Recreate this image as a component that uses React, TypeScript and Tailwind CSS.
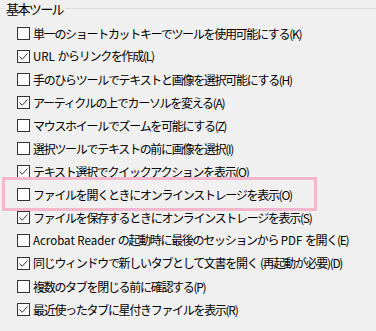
const items: { label: string; checked: boolean }[] = [
  { label: "単一のショートカットキーでツールを使用可能にする(K)", checked: false },
  { label: "URL からリンクを作成(L)", checked: true },
  { label: "手のひらツールでテキストと画像を選択可能にする(H)", checked: false },
  { label: "アーティクルの上でカーソルを変える(A)", checked: true },
  { label: "マウスホイールでズームを可能にする(Z)", checked: false },
  { label: "選択ツールでテキストの前に画像を選択(I)", checked: false },
  { label: "テキスト選択でクイックアクションを表示(Q)", checked: true },
  { label: "ファイルを開くときにオンラインストレージを表示(O)", checked: false },
  { label: "ファイルを保存するときにオンラインストレージを表示(S)", checked: true },
  { label: "Acrobat Reader の起動時に最後のセッションから PDF を開く(E)", checked: false },
  { label: "同じウィンドウで新しいタブとして文書を開く (再起動が必要)(D)", checked: true },
  { label: "複数のタブを閉じる前に確認する(P)", checked: false },
  { label: "最近使ったタブに星付きファイルを表示(R)", checked: true },
];

// latin words keep normal spacing, the japanese runs are tightened
const Label = ({ text }: { text: string }) => {
  const parts = text.split(/([A-Za-z]{2,}(?: [A-Za-z]{2,})*| )/).filter(Boolean);
  return (
    <span className="text-[12px] leading-none whitespace-nowrap">
      {parts.map((p, i) =>
        /^[A-Za-z ]+$/.test(p) ? (
          <span key={i} className="text-[11.5px] tracking-normal">{p}</span>
        ) : (
          <span key={i} className="tracking-[-1.3px]">{p}</span>
        )
      )}
    </span>
  );
};

const Box = ({ checked }: { checked: boolean }) => (
  <span className="w-[13px] h-[13px] shrink-0 border border-[#333333] bg-white flex items-center justify-center">
    {checked && (
      <svg width="11" height="11" viewBox="0 0 11 11">
        <path d="M1.5 5.5 L4.2 8.3 L9.5 2.5" fill="none" stroke="#333333" strokeWidth="1" />
      </svg>
    )}
  </span>
);

export default function App() {
  return (
    <div
      className="relative w-[376px] h-[331px] bg-[#f0f0f0] overflow-hidden text-black"
      style={{ fontFamily: '"Noto Sans CJK JP", "Noto Sans", sans-serif' }}
    >
      <div className="flex items-center h-[16px]">
        <div className="w-[4px] h-px bg-[#dcdcdc]" />
        <span className="px-[2px] text-[13px] tracking-[-1.6px] leading-none">基本ツール</span>
        <div className="flex-1 h-px bg-[#dcdcdc]" />
      </div>
      <ul className="mt-[6px]">
        {items.map((it) => (
          <li key={it.label} className="h-[23px] flex items-center pl-[17px] gap-[3px]">
            <Box checked={it.checked} />
            <Label text={it.label} />
          </li>
        ))}
      </ul>
      <div className="absolute left-[2px] top-[177px] w-[315px] h-[34px] border-[3px] border-[#f5b7cc] pointer-events-none" />
    </div>
  );
}
